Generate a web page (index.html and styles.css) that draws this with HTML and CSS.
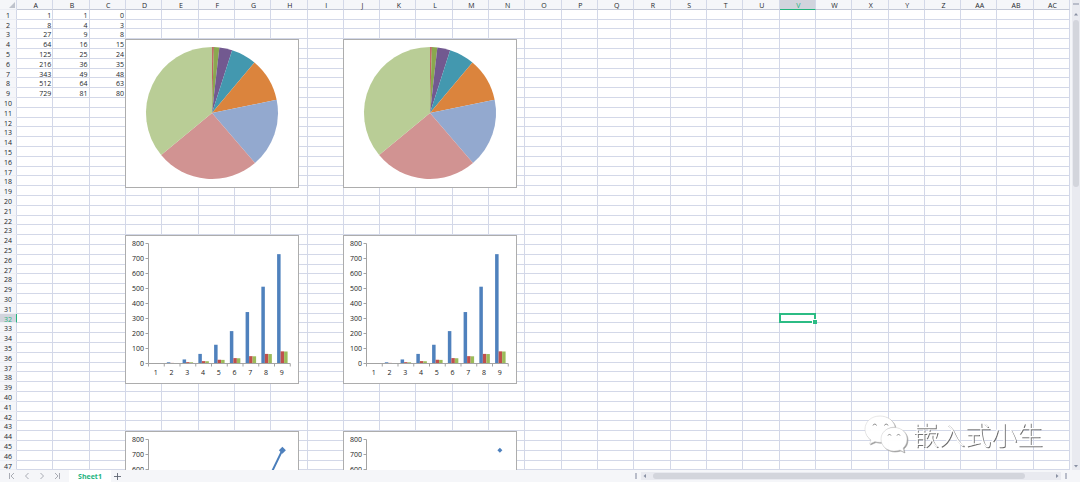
FILE: index.html
```html
<!DOCTYPE html>
<html lang="zh">
<head>
<meta charset="utf-8">
<title>Sheet1</title>
<link rel="stylesheet" href="styles.css">
</head>
<body>
<main class="workspace">
  <div class="sheet">
    <table class="grid">
      <thead id="head"></thead>
      <tbody id="rows"></tbody>
    </table>
  </div>
  <div class="vscroll">
    <span class="split"></span>
    <button class="arrow" aria-label="Scroll up"><svg viewBox="0 0 8 8"><path d="M2 5.500L4 3L6 5.500Z"/></svg></button>
    <div class="track"><div class="thumb"></div></div>
    <button class="arrow" aria-label="Scroll down"><svg viewBox="0 0 8 8"><path d="M2 3L4 5.500L6 3Z"/></svg></button>
  </div>
</main>
<footer class="footer">
  <nav class="nav">
    <button aria-label="First sheet"><svg viewBox="0 0 8 8"><path d="M1.500 1V7M6 1L3 4L6 7"/></svg></button>
    <button aria-label="Previous sheet"><svg viewBox="0 0 8 8"><path d="M5.500 1L2.500 4L5.500 7"/></svg></button>
    <button aria-label="Next sheet"><svg viewBox="0 0 8 8"><path d="M2.500 1L5.500 4L2.500 7"/></svg></button>
    <button aria-label="Last sheet"><svg viewBox="0 0 8 8"><path d="M6.500 1V7M2 1L5 4L2 7"/></svg></button>
  </nav>
  <button class="tab">Sheet1</button>
  <button class="add" aria-label="Add sheet"><svg viewBox="0 0 8 8"><path d="M4 0V8M0 4H8"/></svg></button>
  <div class="hscroll">
    <span class="grip"></span>
    <div class="hbar">
      <button class="arrow" aria-label="Scroll left"><svg viewBox="0 0 8 8"><path d="M5 2L2.500 4L5 6Z"/></svg></button>
      <div class="htrack"><div class="hthumb"></div></div>
      <button class="arrow" aria-label="Scroll right"><svg viewBox="0 0 8 8"><path d="M3 2L5.500 4L3 6Z"/></svg></button>
    </div>
    <span class="grip"></span>
  </div>
</footer>
<div class="watermark">
  <svg class="bubbles" viewBox="0 0 44 38">
    <g class="shade">
      <path d="M16 1C7 1 1 7 1 14C1 19 4 23 7 25L5.500 29L11 26.500C13 27 15 27.500 18 27C16 19 22 12 31 12C30 6 24 1 16 1Z"/>
      <path d="M30 12.500C22 12.500 17 18 17 24C17 31 23 36 30 36C32 36 34 35.500 36 35L40 37L39 33C41.500 31 43 28 43 24C43 18 38 12.500 30 12.500Z"/>
    </g>
    <path class="eyes" d="M9 10.500A1.800 1.800 0 0 1 12.500 10.500M20.500 10.500A1.800 1.800 0 0 1 24 10.500M24 20.500A1.600 1.600 0 0 1 27 20.500M33 20.500A1.600 1.600 0 0 1 36 20.500"/>
  </svg>
  <span>嵌入式小生</span>
</div>
<script src="sheet.js"></script>
</body>
</html>
```
FILE: styles.css
```css
* { box-sizing: border-box; }
body {
  margin: 0;
  height: 100vh;
  display: flex;
  flex-direction: column;
  overflow: hidden;
  background: #f5f6f9;
  color: #22262c;
  font: 7px/9px "Open Sans", "Noto Sans", sans-serif;
}
button { border: 0; padding: 0; margin: 0; background: none; font: inherit; display: flex; align-items: center; justify-content: center; }
svg { display: block; }

.workspace { flex: 1; min-height: 0; display: flex; gap: 2px; }
.sheet { flex: 1; min-width: 0; overflow: hidden; background: #fff; }
.grid, .grid thead, .grid tbody { display: block; }
.grid tr { display: flex; height: 10px; }
.grid tbody tr:nth-child(5n+2) { height: 9px; }
.grid th, .grid td {
  flex: 1 1 0;
  min-width: 0;
  padding: 0 1px;
  position: relative;
  border-right: 1px solid #d3d8e8;
  border-bottom: 1px solid #d3d8e8;
  text-align: right;
  font-weight: 500;
  line-height: 11px;
  white-space: nowrap;
}
.grid th { background: #f5f6f9; text-align: center; }
.grid thead th { padding-left: 3px; border-bottom-color: #c3c8d6; }
.grid tbody th, .grid .corner { flex: 0 0 17px; padding: 0; border-bottom-color: #eceef4; }
.grid .corner svg { width: 6px; height: 6px; margin: 2px 0 0 9px; fill: #bfc3cc; }
.grid thead .active { background: #d1d4dd; color: #24b47e; border-bottom: 1px solid #24b47e; }
.grid tbody .active { background: #d1d4dd; color: #24b47e; border-right: 1px solid #24b47e; }

.cursor { position: absolute; inset: -1px; border: 2px solid #2cbc84; z-index: 1; }
.cursor::after { content: ""; position: absolute; right: -3px; bottom: -3px; width: 4px; height: 4px; background: #2cbc84; border: 1px solid #fff; border-width: 1px 0 0 1px; }

.chart { position: absolute; left: -1px; top: 0; z-index: 2; width: 174px; height: 149px; background: #fff; border: 1px solid #adadad; }
.chart text { font-size: 7px; font-weight: 500; fill: #222; }
.axis { fill: none; stroke: #a3a3a3; stroke-width: 1; }
.line { fill: none; stroke: #4a7ebb; stroke-width: 2; }
.marker, .s0 { fill: #4f81bd; }
.s1 { fill: #c0504d; }
.s2 { fill: #9bbb59; }

.vscroll { flex: 0 0 8px; display: flex; flex-direction: column; align-items: center; background: #e9eaf0; }
.split { width: 6px; height: 2px; margin: 3px 0 4px; background: #b9bdca; }
.arrow { flex: none; width: 8px; height: 9px; }
.arrow svg { width: 8px; height: 8px; fill: #8990a3; }
.track { flex: 1; width: 6px; margin: 2px 0; }
.thumb { height: 38%; border-radius: 3px; background: #d3d5dc; }

.footer { flex: 0 0 12px; display: flex; align-items: center; background: #f5f6f9; }
.nav { display: flex; gap: 7px; padding: 0 8px; }
.nav svg { width: 8px; height: 8px; fill: none; stroke: #a9acb4; }
.tab { width: 42px; height: 12px; background: #fff; color: #24b47e; font-weight: 700; }
.add { margin-left: 3px; }
.add svg { width: 7px; height: 7px; stroke: #5c626f; }
.hscroll { flex: 0 0 40%; margin-left: auto; margin-right: 13px; display: flex; align-items: center; gap: 4px; }
.hbar { flex: 1; height: 8px; display: flex; align-items: center; background: #e9eaf0; }
.grip { width: 2px; height: 6px; background: #b9bdca; }
.htrack { flex: 1; margin: 0 4px; }
.hthumb { width: 94%; height: 6px; border-radius: 3px; background: #d3d5dc; }

.watermark { position: absolute; right: 37px; bottom: 29px; z-index: 3; display: flex; align-items: center; gap: 5px; opacity: 0.99; will-change: opacity; }
.bubbles { width: 44px; height: 38px; overflow: visible; }
.shade { fill: #fff; stroke: #d0d0d0; stroke-width: 0.500; filter: drop-shadow(1px 1px 0 #999); }
.eyes { fill: none; stroke: #888; stroke-width: 1; }
.watermark span { font: 26px/36px "Noto Sans CJK SC", sans-serif; font-weight: 300; color: #fff; text-shadow: 1px 1px 0 #707070; }
```
FILE: sheet.js
```js
const columns = [..."ABCDEFGHIJKLMNOPQRSTUVWXYZ", "AA", "AB", "AC"];
const data = [1, 2, 3, 4, 5, 6, 7, 8, 9].map(n => [n ** 3, n ** 2, n ** 2 - 1]);
const cubes = data.map(row => row[0]);
const selected = { column: "V", row: 32 };
const base = 127.5, axisX = 22.5, step = 15.75, scale = 0.15;

function pie() {
  const colors = ["#b8504f", "#b8504f", "#8aa84f", "#725990", "#4398af", "#db843d", "#93a9cf", "#d19392", "#b9cd96"];
  const total = cubes.reduce((a, b) => a + b);
  const point = t => `${86 + 66 * Math.sin(t)} ${73 - 66 * Math.cos(t)}`;
  let angle = 0;
  return cubes.map((v, i) => {
    const start = angle;
    angle += v / total * 2 * Math.PI;
    return `<path fill="${colors[i]}" d="M86 73L${point(start)}A66 66 0 0 1 ${point(angle)}Z"/>`;
  }).join("");
}

function axes(categories) {
  let ticks = `M${axisX} 7.5V${base}H${axisX + 9 * step}`;
  let labels = "";
  for (let v = categories ? 0 : 600; v <= 800; v += 100) {
    const y = base - v * scale;
    ticks += `M${axisX - 3} ${y}H${axisX}`;
    labels += `<text x="18" y="${y + 2.5}" text-anchor="end">${v}</text>`;
  }
  if (categories) {
    for (let i = 0; i <= 9; i++) ticks += `M${axisX + i * step} ${base}v3`;
    for (let i = 0; i < 9; i++) labels += `<text x="${axisX + (i + 0.5) * step - 0.5}" y="139" text-anchor="middle">${i + 1}</text>`;
  }
  return `<path class="axis" d="${ticks}"/>${labels}`;
}

function bars() {
  return data.map((row, i) => row.map((v, s) =>
    `<rect class="s${s}" x="${axisX + i * step + 2.6 + s * 3.5}" y="${base - v * scale}" width="3.5" height="${v * scale}"/>`
  ).join("")).join("") + axes(true);
}

function points(size, joined) {
  const pts = cubes.map((v, i) => [axisX + (i + 0.5) * step - (joined ? 0 : 0.5), base - v * scale]);
  const line = joined ? `<polyline class="line" points="${pts.join(" ")}"/>` : "";
  return axes(false) + line + pts.map(([x, y]) =>
    `<path class="marker" d="M${x} ${y - size}l${size} ${size}l${-size} ${size}l${-size} ${-size}Z"/>`).join("");
}

const charts = {
  D4: pie(), J4: pie(),
  D24: bars(), J24: bars(),
  D44: points(3.5, true), J44: points(2.5, false)
};

document.getElementById("head").innerHTML =
  `<tr><th class="corner"><svg viewBox="0 0 6 6"><path d="M6 0V6H0Z"/></svg></th>` +
  columns.map(c => `<th${c === selected.column ? ' class="active"' : ""}>${c}</th>`).join("") + "</tr>";

let html = "";
for (let r = 1; r <= 47; r++) {
  html += `<tr><th${r === selected.row ? ' class="active"' : ""}>${r}</th>`;
  columns.forEach((c, i) => {
    let content = data[r - 1]?.[i] ?? "";
    if (charts[c + r]) content = `<div class="chart"><svg width="172" height="147">${charts[c + r]}</svg></div>`;
    if (c === selected.column && r === selected.row) content = `<div class="cursor"></div>`;
    html += `<td>${content}</td>`;
  });
  html += "</tr>";
}
document.getElementById("rows").innerHTML = html;
```
